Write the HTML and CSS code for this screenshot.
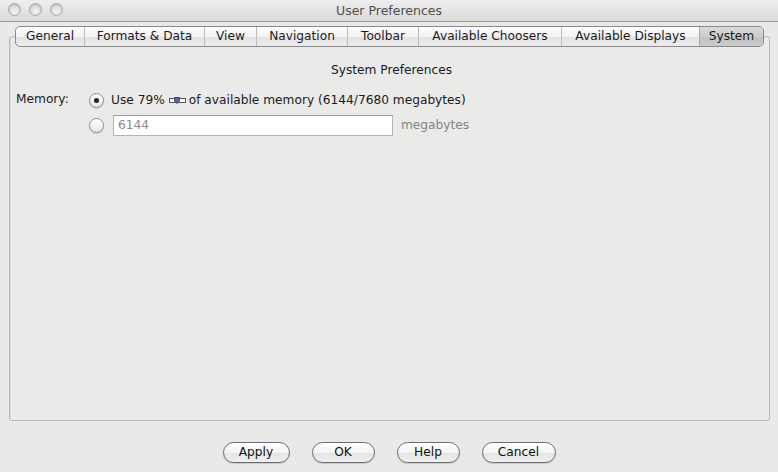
FILE: index.html
```html
<!DOCTYPE html>
<html>
<head>
<meta charset="utf-8">
<link rel="stylesheet" href="styles.css">
</head>
<body>
<div class="window">
  <div class="titlebar">
    <div class="lights">
      <span class="light"></span><span class="light"></span><span class="light"></span>
    </div>
    <div class="title">User Preferences</div>
  </div>
  <div class="body">
    <div class="tabs">
      <div class="tab t1">General</div>
      <div class="tab t2">Formats &amp; Data</div>
      <div class="tab t3">View</div>
      <div class="tab t4">Navigation</div>
      <div class="tab t5">Toolbar</div>
      <div class="tab t6">Available Choosers</div>
      <div class="tab t7">Available Displays</div>
      <div class="tab t8 selected">System</div>
    </div>
    <div class="panel">
      <div class="heading">System Preferences</div>
      <div class="memory">
        <div class="label">Memory:</div>
        <div class="options">
          <div class="opt">
            <span class="radio checked"></span>
            <span class="text">Use 79%</span>
            <svg class="slider" width="17" height="9" viewBox="0 0 17 9">
              <rect x="0.5" y="2.5" width="16" height="4" fill="#fff" stroke="#555"/>
              <path d="M5.5 1.5 H10.5 V5 L8 7.5 L5.5 5 Z" fill="#5a6a9a" stroke="#3b4670" stroke-width="1"/>
            </svg>
            <span class="text">of available memory (6144/7680 megabytes)</span>
          </div>
          <div class="opt">
            <span class="radio"></span>
            <span class="field">6144</span>
            <span class="unit">megabytes</span>
          </div>
        </div>
      </div>
    </div>
    <div class="buttons">
      <button class="btn b-apply">Apply</button>
      <button class="btn b-ok">OK</button>
      <button class="btn b-help">Help</button>
      <button class="btn b-cancel">Cancel</button>
    </div>
  </div>
</div>
</body>
</html>
```
FILE: styles.css
```css
* { box-sizing: border-box; }
html, body {
  margin: 0;
  padding: 0;
  width: 778px;
  height: 472px;
  overflow: hidden;
  background: #e8e8e8;
  font-family: "DejaVu Sans", "Liberation Sans", sans-serif;
  font-size: 12px;
  color: #1b1b1b;
}
.window {
  width: 778px;
  height: 472px;
  display: flex;
  flex-direction: column;
  background: #e9e9e7;
}
.titlebar {
  height: 22px;
  flex: none;
  display: flex;
  align-items: center;
  position: relative;
  background: linear-gradient(#eeeeee, #d9d9d9);
  border-bottom: 1px solid #9c9c9c;
}
.lights {
  display: flex;
  gap: 8px;
  padding-left: 8px;
  margin-top: -2px;
}
.light {
  width: 13px;
  height: 13px;
  border-radius: 50%;
  border: 1px solid #a9a9a9;
  background: radial-gradient(circle at 50% 70%, #f4f4f4 0%, #dcdcdc 55%, #c9c9c9 100%);
  box-shadow: inset 0 1px 1px rgba(0,0,0,0.12);
}
.title {
  position: absolute;
  left: 0;
  right: 0;
  top: 3px;
  text-align: center;
  color: #4f4f4f;
  font-size: 12.5px;
}
.body {
  flex: 1;
  display: flex;
  flex-direction: column;
  padding: 4px 9px 0 9px;
}
.tabs {
  display: flex;
  margin-left: 6px;
  width: 749px;
  height: 21px;
  border: 1px solid #8a8a8a;
  border-radius: 5px;
  background: linear-gradient(#ffffff, #f1f1f1 50%, #e2e2e2 51%, #ececec);
  position: relative;
  z-index: 2;
  overflow: hidden;
}
.tab {
  flex: none;
  height: 19px;
  line-height: 19px;
  text-align: center;
  border-left: 1px solid #bdbdbd;
  white-space: nowrap;
  font-size: 12.2px;
}
.tab.t1 { width: 68px; border-left: none; }
.tab.t2 { width: 120px; }
.tab.t3 { width: 52px; }
.tab.t4 { width: 91px; }
.tab.t5 { width: 71px; }
.tab.t6 { width: 143px; }
.tab.t7 { width: 138px; }
.tab.t8 { width: 64px; }
.tab.selected {
  background: linear-gradient(#d9d9d9, #cdcdcd 50%, #c2c2c2 51%, #cbcbcb);
  border-left-color: #a8a8a8;
}
.panel {
  margin-top: -11px;
  width: 761px;
  height: 385px;
  border: 1px solid #b9b9b9;
  border-top-color: #c4c4c4;
  border-radius: 3px;
  background: #eaeae8;
  box-shadow: inset 1px 1px 0 #dadad8;
  padding-top: 24px;
  display: flex;
  flex-direction: column;
}
.heading {
  text-align: center;
  height: 18px;
  line-height: 18px;
  font-size: 12.2px;
  padding-left: 4px;
}
.memory {
  display: flex;
  margin-top: 12px;
  padding-left: 6px;
}
.label {
  width: 73px;
  height: 18px;
  line-height: 16px;
  font-size: 12.2px;
}
.options {
  display: flex;
  flex-direction: column;
  gap: 5px;
}
.opt {
  display: flex;
  align-items: center;
  height: 22px;
}
.opt:first-child { height: 18px; }
.radio {
  width: 15px;
  height: 15px;
  border-radius: 50%;
  border: 1px solid #8d8d8d;
  background: linear-gradient(#ffffff, #e6e6e6);
  box-shadow: 0 1px 1px rgba(0,0,0,0.12);
  position: relative;
  flex: none;
  margin-right: 7px;
}
.radio.checked::after {
  content: "";
  position: absolute;
  left: 4px;
  top: 4px;
  width: 5px;
  height: 5px;
  border-radius: 50%;
  background: #222;
}
.text {
  font-size: 12.2px;
  white-space: nowrap;
}
.slider {
  margin: 0 3px 0 4px;
  flex: none;
}
.field {
  width: 280px;
  height: 21px;
  line-height: 19px;
  border: 1px solid #b3b3b3;
  border-top-color: #9a9a9a;
  background: #fff;
  padding-left: 4px;
  color: #8a8a8a;
  font-size: 12.2px;
  margin-left: 2px;
}
.unit {
  margin-left: 8px;
  color: #848484;
  font-size: 12.2px;
}
.buttons {
  display: flex;
  justify-content: center;
  gap: 22px;
  margin-top: 21px;
  padding-right: 0;
}
.btn {
  height: 21px;
  border: 1px solid #6d6d6d;
  border-radius: 11px;
  background: linear-gradient(#ffffff, #f3f3f3 50%, #e4e4e4 51%, #efefef);
  box-shadow: 0 1px 1px rgba(0,0,0,0.15);
  font-family: "DejaVu Sans", "Liberation Sans", sans-serif;
  font-size: 12.2px;
  color: #111;
  padding: 0;
  line-height: 19px;
}
.b-apply { width: 67px; }
.b-ok { width: 63px; }
.b-help { width: 63px; }
.b-cancel { width: 74px; }
```
